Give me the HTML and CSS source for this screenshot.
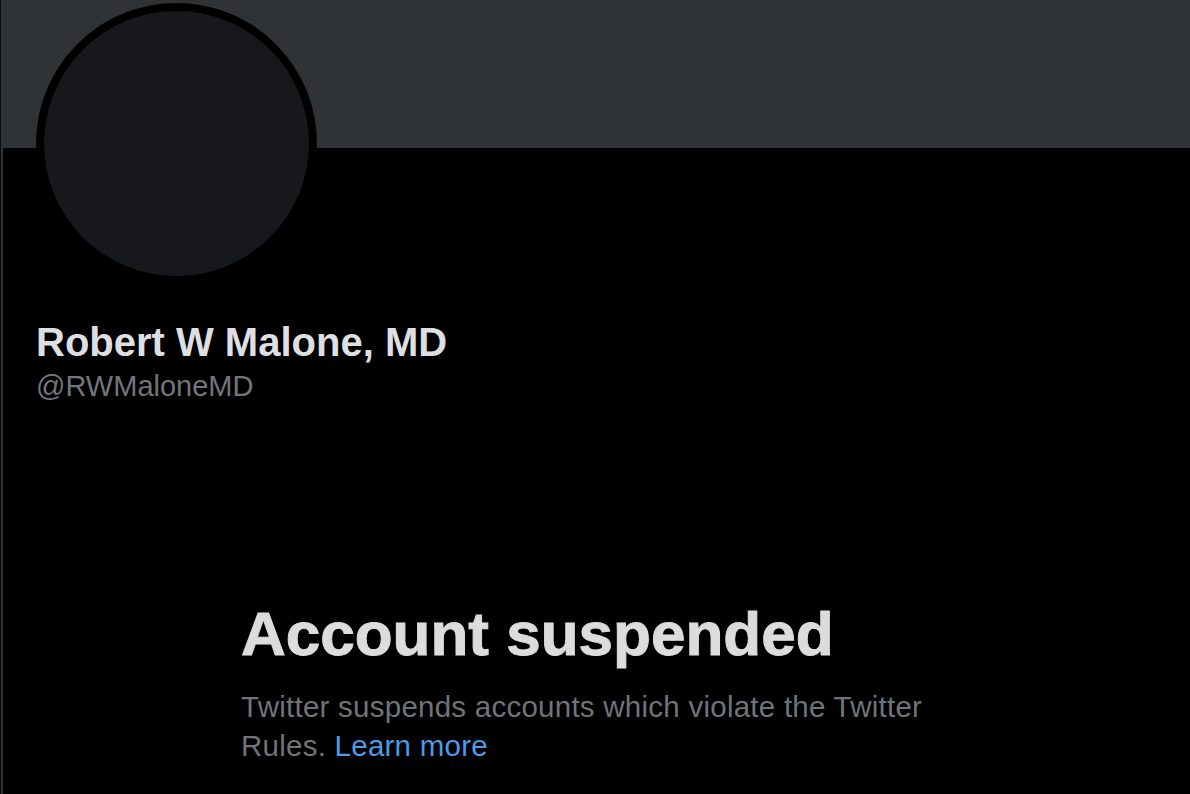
FILE: index.html
```html
<!DOCTYPE html>
<html lang="en">
<head>
<meta charset="utf-8">
<title>Robert W Malone, MD (@RWMaloneMD) / Twitter</title>
<link rel="stylesheet" href="styles.css">
</head>
<body>
<div class="page">
  <div class="column">
    <div class="banner"></div>
    <main class="profile">
      <div class="avatar-row">
        <div class="avatar"></div>
      </div>
      <div class="identity">
        <div class="name">Robert W Malone, MD</div>
        <div class="handle">@RWMaloneMD</div>
      </div>
      <section class="empty-state">
        <h1 class="empty-title">Account suspended</h1>
        <p class="empty-text">Twitter suspends accounts which violate the Twitter Rules. <a class="link" href="#">Learn more</a></p>
      </section>
    </main>
  </div>
</div>
</body>
</html>
```

FILE: styles.css
```css
html, body {
  margin: 0;
  padding: 0;
  background: #000;
  height: 100%;
  overflow: hidden;
}

body {
  font-family: "Liberation Sans", Arial, sans-serif;
  color: #dedfe0;
}

.page {
  width: 1190px;
  height: 794px;
  display: flex;
  background: #0a0b0c;
}

.column {
  flex: 1;
  margin-left: 1px;
  border-left: 2px solid #2f3336;
  background: #000;
  display: flex;
  flex-direction: column;
}

.banner {
  height: 148px;
  background: #2f3336;
  flex: none;
}

.profile {
  flex: 1;
  padding-left: 33px;
}

.avatar-row {
  margin-top: -145px;
  height: 281px;
}

.avatar {
  width: 265px;
  height: 265px;
  border-radius: 50%;
  border: 8px solid #000;
  background: #17181c;
}

.identity {
  margin-top: 34px;
}

.name {
  font-size: 40px;
  line-height: 48px;
  font-weight: 700;
  color: #dedfe0;
}

.handle {
  font-size: 29px;
  line-height: 40px;
  color: #71767b;
}

.empty-state {
  margin-top: 192px;
  margin-left: 205px;
  width: 720px;
}

.empty-title {
  margin: 0;
  font-size: 62px;
  line-height: 72px;
  font-weight: 700;
  color: #dcdcdc;
  -webkit-text-stroke: 1px #dcdcdc;
}

.empty-text {
  margin: 17px 0 0;
  font-size: 29.5px;
  line-height: 39px;
  letter-spacing: 0.25px;
  color: #6f7479;
}

.link {
  color: #4a9be8;
  text-decoration: none;
}
```
